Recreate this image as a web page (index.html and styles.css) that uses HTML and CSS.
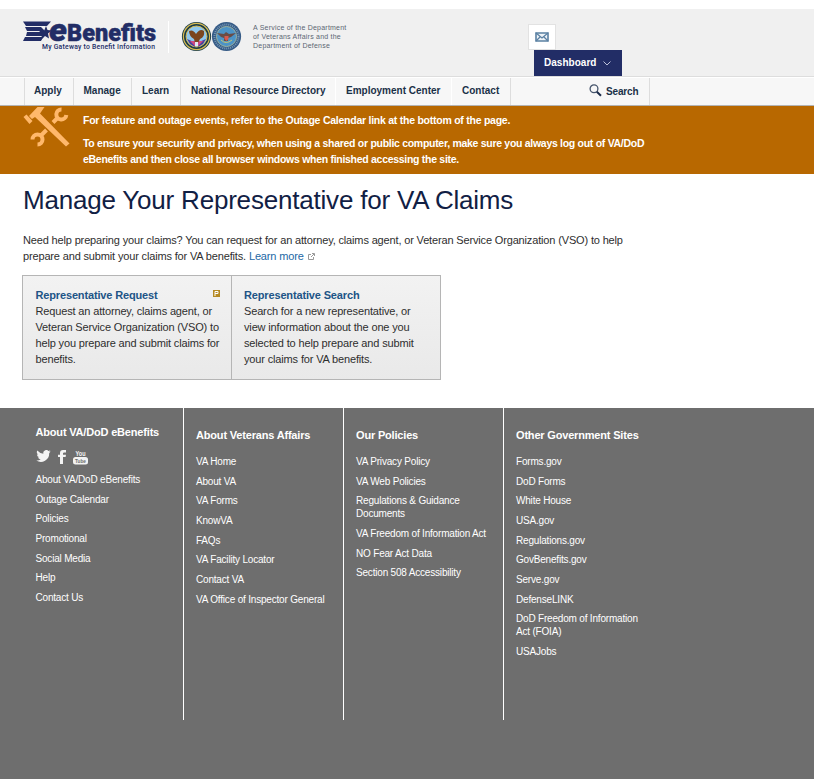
FILE: index.html
```html
<!DOCTYPE html>
<html lang="en">
<head>
<meta charset="utf-8">
<title>eBenefits - Manage Your Representative for VA Claims</title>
<link rel="stylesheet" href="styles.css">
</head>
<body>
<header class="header">
  <div class="brand">
    <svg class="logo" width="134" height="31" viewBox="0 0 134 31">
      <g fill="#222d66">
        <path d="M0 .5H28L24 5H3Z"/><path d="M2 6H18L22 10H4Z"/><path d="M4 11H21L20 15H3Z"/><path d="M2 16H20L18 20H0Z"/>
        <path d="M23 5l1.500 4 4 .5-3.500 3 1 5-4-2.500-5 5 2.500-7-3.500-3h5z"/>
      </g>
      <text x="26" y="19.500" class="logo-e" textLength="18" lengthAdjust="spacingAndGlyphs">e</text>
      <text x="44" y="20" class="logo-name" textLength="89" lengthAdjust="spacingAndGlyphs">Benefits</text>
      <text x="19" y="27.500" class="logo-tag" textLength="113" lengthAdjust="spacing">My Gateway to Benefit Information</text>
    </svg>
    <svg class="seals" width="62" height="32" viewBox="0 0 62 32">
      <circle cx="15.500" cy="15.500" r="14.600" fill="#183b48"/>
      <circle cx="15.500" cy="15.500" r="13.100" fill="none" stroke="#d6b952" stroke-width="1.200"/>
      <circle cx="15.500" cy="15.500" r="10.500" fill="#8fc8ee" stroke="#d6b952"/>
      <path d="M6 18l7 3 1 5-5-3zM25 18l-7 3-1 5 5-3z" fill="#4e3f9c"/>
      <path d="M9 20l5 5 1-5zM22 20l-5 5-1-5z" fill="#d14a83"/>
      <path d="M8 10q4-2 7 3 4-6 8-3 1 6-4 8l-2 4h-3l-1-4q-5-3-5-8z" fill="#7b461f"/>
      <path d="M14 21h3v4h-3z" fill="#dfe9f7"/>
      <circle cx="45.500" cy="15.500" r="14.600" fill="#365b86"/>
      <circle cx="45.500" cy="15.500" r="12" fill="none" stroke="#7899b5" stroke-width="2" stroke-dasharray="1 1"/>
      <circle cx="45.500" cy="15.500" r="10" fill="#4c93c6" stroke="#9fb4a0"/>
      <path d="M36 12l7 1 2-2 3 2 7-1-5 4-3 1v3h-4v-3l-3-1z" fill="#694c46"/>
      <path d="M43.500 15h4v3l-2 2-2-2z" fill="#d65a50"/>
      <path d="M40 19q5 5 11 0" fill="none" stroke="#c6c675"/>
    </svg>
    <p class="service">A Service of the Department<br>of Veterans Affairs and the<br>Department of Defense</p>
  </div>
  <div class="account">
    <a class="mail"><svg width="14" height="10" viewBox="0 0 14 10"><path d="M1 1h12v8H1z" fill="#eef3f7" stroke="#5b81a3" stroke-width="1.600"/><path d="M1 1l6 5 6-5M1 9l4.500-4.500M13 9L8.500 4.500" fill="none" stroke="#5b81a3" stroke-width="1.300"/></svg></a>
    <a class="dashboard">Dashboard<svg width="8" height="5" viewBox="0 0 8 5"><path d="M.5.5L4 4 7.500.5" fill="none" stroke="#bcc1da"/></svg></a>
  </div>
</header>
<nav class="nav">
  <a class="n1">Apply</a><a class="n2">Manage</a><a class="n3">Learn</a><a class="n4 faint">National Resource Directory</a><a class="n5 faint">Employment Center</a><a class="n6">Contact</a>
  <a class="search"><svg width="13" height="13" viewBox="0 0 13 13"><circle cx="5" cy="4.800" r="3.900" fill="none" stroke="#45546b" stroke-width="1.300"/><path d="M7.800 7.800l4.200 4" stroke="#1b2b4a" stroke-width="2"/></svg><span>Search</span></a>
</nav>
<section class="banner">
  <svg class="tools" width="47" height="42" viewBox="0 0 47 42">
    <g fill="#ffb86b">
      <path d="M6 10L14.500 1H21.500L17 7.500l29.500 30L43 40.500 12 11l-3 2z"/>
      <path d="M.5 11l3-2.500L9.500 15l-3 3z"/>
    </g>
    <g fill="none" stroke="#ffb86b" stroke-width="4">
      <path d="M38.500 3.500a5 5 0 1 0 4.800 5.500M34.500 12l-4.500 4.500"/>
      <path d="M9.500 33.500a5 5 0 1 1 5 5M18 29.500l5.500-5.500"/>
    </g>
  </svg>
  <div class="notice">
    <p>For feature and outage events, refer to the Outage Calendar link at the bottom of the page.</p>
    <p>To ensure your security and privacy, when using a shared or public computer, make sure you always log out of VA/DoD<br>eBenefits and then close all browser windows when finished accessing the site.</p>
  </div>
</section>
<main class="main">
  <h1>Manage Your Representative for VA Claims</h1>
  <p class="intro">Need help preparing your claims? You can request for an attorney, claims agent, or Veteran Service Organization (VSO) to help<br>prepare and submit your claims for VA benefits. <a>Learn more</a> <svg width="7" height="7" viewBox="0 0 7 7"><path d="M3 1.500H.5v5h5V4M3 4l3-3M4 .5h2.500V3" fill="none" stroke="#999"/></svg></p>
  <div class="cards">
    <article><h2>Representative Request<svg width="7" height="7" viewBox="0 0 7 7"><path d="M0 0h7v7H0z" fill="#b58a24"/><path d="M2 6V1.500h3v2H2" fill="none" stroke="#fff"/></svg></h2><p>Request an attorney, claims agent, or<br>Veteran Service Organization (VSO) to<br>help you prepare and submit claims for<br>benefits.</p></article>
    <article><h2>Representative Search</h2><p>Search for a new representative, or<br>view information about the one you<br>selected to help prepare and submit<br>your claims for VA benefits.</p></article>
  </div>
</main>
<footer class="footer">
  <section class="col first"><h3>About VA/DoD eBenefits</h3>
    <div class="social">
      <svg width="15" height="12" viewBox="0 0 24 20"><path fill="#f3f3f3" d="M24 2.400a10 10 0 0 1-2.800.8A5 5 0 0 0 23.300.5a10 10 0 0 1-3.100 1.200 4.900 4.900 0 0 0-8.400 4.500A14 14 0 0 1 1.700 1a4.900 4.900 0 0 0 1.500 6.600A5 5 0 0 1 1 7a4.900 4.900 0 0 0 3.900 4.900 5 5 0 0 1-2.200.1 4.900 4.900 0 0 0 4.600 3.400A9.900 9.900 0 0 1 0 17.500 14 14 0 0 0 21.500 5 10 10 0 0 0 24 2.400z"/></svg>
      <svg width="8" height="14" viewBox="0 0 8 14"><path fill="#f3f3f3" d="M2 14V7H0V4.700h2V3Q2 0 5 0h3v2.500H6.200Q5 2.500 5 3.600v1.100h3L7.600 7H5v7z"/></svg>
      <svg width="15" height="15" viewBox="0 0 15 15"><text x="2.500" y="6" class="yt" textLength="10" lengthAdjust="spacingAndGlyphs">You</text><rect y="7" width="15" height="7.500" rx="2.500" fill="#f3f3f3"/><text x="2" y="13" class="yt tube" textLength="11" lengthAdjust="spacingAndGlyphs">Tube</text></svg>
    </div>
    <ul><li>About VA/DoD eBenefits</li><li>Outage Calendar</li><li>Policies</li><li>Promotional</li><li>Social Media</li><li>Help</li><li>Contact Us</li></ul></section>
  <section class="col"><h3>About Veterans Affairs</h3><ul><li>VA Home</li><li>About VA</li><li>VA Forms</li><li>KnowVA</li><li>FAQs</li><li>VA Facility Locator</li><li>Contact VA</li><li>VA Office of Inspector General</li></ul></section>
  <section class="col"><h3>Our Policies</h3><ul><li>VA Privacy Policy</li><li>VA Web Policies</li><li>Regulations &amp; Guidance<br>Documents</li><li>VA Freedom of Information Act</li><li>NO Fear Act Data</li><li>Section 508 Accessibility</li></ul></section>
  <section class="col last"><h3>Other Government Sites</h3><ul><li>Forms.gov</li><li>DoD Forms</li><li>White House</li><li>USA.gov</li><li>Regulations.gov</li><li>GovBenefits.gov</li><li>Serve.gov</li><li>DefenseLINK</li><li>DoD Freedom of Information<br>Act (FOIA)</li><li>USAJobs</li></ul></section>
</footer>
</body>
</html>
```
FILE: styles.css
```css
* { box-sizing: border-box; }
body { margin: 0; padding-top: 9px; background: #fff; font-family: "Liberation Sans", Arial, sans-serif; font-size: 11px; line-height: 16px; color: #2e2e2e; }
h1, h2, h3, p, ul { margin: 0; padding: 0; }
ul { list-style: none; }
svg { display: block; flex: none; }
.header { height: 68px; background: #f0f0f0; border-bottom: 1px solid #ddd; display: flex; }
.brand { width: 528px; padding: 12px 0 0 23px; display: flex; align-items: flex-start; }
.logo { overflow: visible; }
.logo-e { font: italic 900 32px Roboto, sans-serif; fill: #222d66; stroke: #222d66; stroke-width: .5px; }
.logo-name { font: 900 24px Roboto, sans-serif; fill: #222d66; stroke: #222d66; stroke-width: .5px; }
.logo-tag { font: 500 6.800px Roboto, sans-serif; fill: #222d66; }
.seals { margin-left: 11px; box-sizing: content-box; border-left: 1px solid #fff; padding-left: 12px; }
.service { margin: 2px 0 0 10px; font-size: 7px; line-height: 9px; letter-spacing: .22px; color: #5b6673; white-space: nowrap; }
.account { padding-top: 15px; }
.mail { display: flex; width: 28px; height: 26px; border: 1px solid #e2e2e2; background: #fff; align-items: center; justify-content: center; }
.dashboard { display: flex; width: 88px; height: 26px; margin-left: 6px; padding: 0 11px 0 10px; background: #222d66; color: #fff; font-weight: bold; font-size: 10px; letter-spacing: .03px; align-items: center; justify-content: space-between; }
.nav { height: 29px; border-top: 1px solid #fff; border-bottom: 1px solid #b4b4b4; padding-left: 24px; background: #f7f7f7; display: flex; color: #1b3148; font-size: 10px; font-weight: bold; line-height: 25px; }
.nav a { border-right: 1px solid #ddd; padding-left: 10px; white-space: nowrap; }
.nav .faint { border-color: #fff; }
.nav .n1 { width: 50px; border-left: 1px solid #ddd; padding-left: 9px; }
.nav .n2 { width: 58px; padding-left: 9.500px; } .n3 { width: 49px; } .n4 { width: 155px; } .n5 { width: 116px; } .n6 { width: 59px; }
.nav .search { width: 139px; padding: 6px 0 0 78px; display: flex; gap: 4px; line-height: 14px; }
.nav .search span { margin-top: 1px; letter-spacing: -.15px; }
.banner { height: 68px; background: #b86800; display: flex; padding-left: 23px; }
.notice { margin-left: 13px; padding-top: 6px; color: #fff; font-weight: bold; font-size: 10.500px; letter-spacing: -.29px; white-space: nowrap; }
.notice p:first-child { letter-spacing: -.25px; }
.notice p + p { margin-top: 7px; }
.main { height: 234px; padding: 9px 0 0 22px; }
.main h1 { margin-left: 1px; font-size: 26px; line-height: 34px; letter-spacing: -.2px; font-weight: normal; color: #112044; }
.intro { margin: 15px 0 11px 1px; white-space: nowrap; font-size: 11px; letter-spacing: -.155px; }
.intro a { color: #2368a5; }
.intro svg { display: inline-block; vertical-align: 0; margin-left: 1px; }
.cards { display: flex; width: 419px; height: 105px; border: 1px solid #b5b5b5; background: linear-gradient(#f2f2f2, #e9e9e9); white-space: nowrap; letter-spacing: -.15px; }
.cards article { width: 208px; padding: 11px 0 0 12.500px; }
.cards article + article { width: 210px; border-left: 1px solid #b5b5b5; }
.cards h2 { display: flex; justify-content: space-between; padding-right: 11px; font-size: 11px; line-height: 16px; color: #205486; }
.cards svg { margin-top: 3px; }
.footer { height: 371px; background: #6e6e6e; color: #fff; display: flex; padding-left: 24px; }
.col { width: 160px; height: 312px; padding: 19px 0 0 12px; border-right: 1px solid #fff; white-space: nowrap; }
.col.first { padding: 16px 0 0 11.500px; }
.col.last { border: 0; }
.col h3 { font-size: 11px; line-height: 16px; height: 28px; letter-spacing: -.18px; }
.first h3 { height: 25px; }
.social { height: 24px; display: flex; gap: 7px; padding: 1px 0 0; }
.col li { font-size: 10px; line-height: 13px; margin-bottom: 6.660px; letter-spacing: -.19px; }
.yt { font: bold 7px "Liberation Sans", sans-serif; fill: #f3f3f3; }
.yt.tube { font-size: 6px; fill: #6e6e6e; }
```
